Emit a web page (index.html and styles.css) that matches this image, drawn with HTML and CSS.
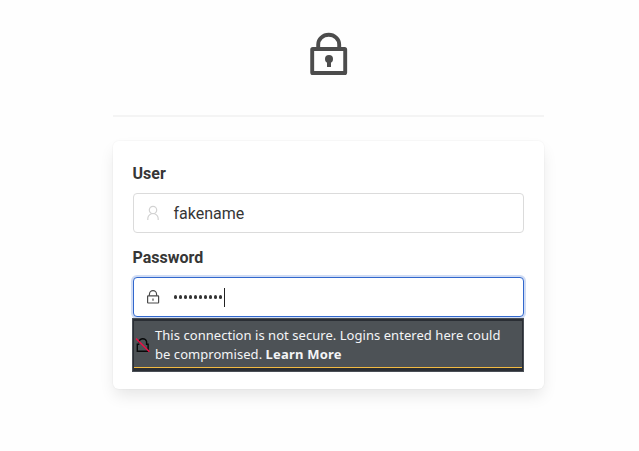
FILE: index.html
```
<!DOCTYPE html>
<html lang="en">
<head>
<meta charset="utf-8">
<title>Login</title>
<link rel="stylesheet" href="styles.css">
</head>
<body>
<main class="login">
  <header class="header">
    <svg class="logo" viewBox="0 0 38 44" fill="none" stroke="#4c4c4c">
      <rect x="2.2" y="17" width="33" height="24" rx="0.6" stroke-width="3.9"/>
      <path d="M8.2 16V12.5a10.5 9.8 0 0 1 21 0V16" stroke-width="3.9"/>
      <circle cx="19" cy="27" r="4" fill="#4c4c4c" stroke="none"/>
      <path d="M19 27v8" stroke-width="4"/>
    </svg>
  </header>
  <form class="card">
    <label class="label" for="user">User</label>
    <div class="field">
      <svg class="icon" viewBox="0 0 14 16" fill="none" stroke="#d2d2d2" stroke-width="1.2">
        <circle cx="7" cy="5" r="3.7"/>
        <path d="M1.8 15v-1.2c0-2.4 1.6-4.2 3.7-5.1M12.2 15v-1.2c0-2.4-1.6-4.2-3.7-5.1"/>
      </svg>
      <span class="value" id="user">fakename</span>
    </div>
    <label class="label label-password" for="password">Password</label>
    <div class="field field-focus">
      <svg class="icon" viewBox="0 0 14 16" fill="none" stroke="#4a4a4a" stroke-width="1.2">
        <rect x="1.6" y="6.9" width="11" height="7.1" rx="0.5"/>
        <path d="M3.4 6.8V5.4a3.6 3.7 0 0 1 7.2 0v1.4M7 9.4v2.3"/>
      </svg>
      <span class="dots" id="password"><i></i><i></i><i></i><i></i><i></i><i></i><i></i><i></i><i></i><i></i></span><span class="caret"></span>
      <div class="warning">
        <svg class="insecure" viewBox="0 0 16 18" fill="none" stroke="#08090a" stroke-width="1.4">
          <path d="M4 7.5v-.8a3.9 3.9 0 0 1 7.6 0V9.2h1.5v7H2.3V9.2h2"/>
          <path d="M1 3.4l13.4 13.4" stroke="#f00c45" stroke-width="1.4"/>
        </svg>
        <p class="message">This connection is not secure. Logins entered here could<br>be compromised. <b>Learn More</b></p>
      </div>
    </div>
  </form>
</main>
</body>
</html>
```

FILE: styles.css
```
* { box-sizing: border-box; }
body {
  margin: 0;
  height: 451px;
  overflow: hidden;
  background: #fefefe;
  color: #363636;
  font: 16px/20px Roboto, sans-serif;
}
.login { width: 431px; margin-left: 113px; }
.header {
  display: flex;
  justify-content: center;
  height: 117px;
  padding-top: 32px;
  border-bottom: 2px solid #f4f4f4;
}
.logo { width: 38px; height: 44px; }
.card {
  height: 248px;
  margin-top: 24px;
  padding: 23px 20px 0;
  border-radius: 6px;
  background: #fff;
  box-shadow: 0 8px 16px -2px rgba(10, 10, 10, .1), 0 0 0 1px rgba(10, 10, 10, .02);
}
.label {
  display: block;
  height: 20px;
  margin: 0 0 9px -.5px;
  font-weight: 700;
}
.label-password { margin-top: 15px; }
.field {
  position: relative;
  display: flex;
  align-items: center;
  width: 391px;
  height: 40px;
  padding-left: 12px;
  border: 1px solid #dbdbdb;
  border-radius: 4px;
  background: #fff;
}
.field-focus {
  border-color: #3268cd;
  box-shadow: 0 0 0 2px #d0dcf4;
}
.icon { width: 14px; height: 16px; margin: 0 14px 0 -.5px; }
.value { padding-top: 2px; }
.dots { display: flex; gap: 1.5px; }
.dots i {
  width: 3.5px;
  height: 3.5px;
  border-radius: 50%;
  background: #363636;
}
.caret { width: 1px; height: 19px; margin-left: 1.5px; background: #222; }
.warning {
  position: absolute;
  top: 40px;
  left: -2px;
  display: flex;
  width: 392px;
  height: 54px;
  padding-left: 2px;
  background: linear-gradient(#f2ba42, #f2ba42) 1px 48px / 388px 1px no-repeat,
    linear-gradient(#4d5256, #4d5256) 1px 2px / 388px 46px no-repeat, #2a2e34;
  border: 1px solid #4a4f56;
  color: #f4f5f6;
}
.insecure { flex: none; width: 16px; height: 18px; margin: 16px 0 0; }
.message {
  margin: 7px 0 0 4px;
  font: 13px/19px "Noto Sans", sans-serif;
  letter-spacing: .045px;
  white-space: nowrap;
}
.message b { letter-spacing: .2px; }
```
